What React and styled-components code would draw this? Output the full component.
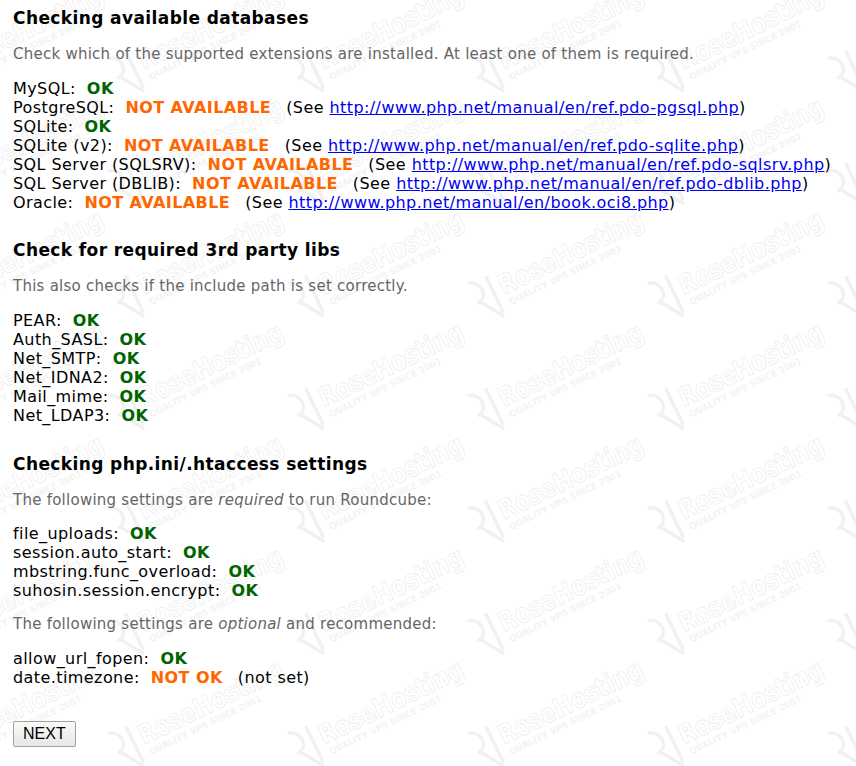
import React from "react";
import styled, { createGlobalStyle } from "styled-components";

const Global = createGlobalStyle`
  html, body { margin: 0; padding: 0; background: #fff; }
  body { font-family: Verdana, "DejaVu Sans", sans-serif; color: #000; }
`;

const Page = styled.div`
  position: relative;
  width: 856px;
  height: 766px;
  overflow: hidden;
  padding: 8px 13px 0 13px;
  box-sizing: border-box;
`;

const Content = styled.div`
  position: relative;
  z-index: 1;
`;

const Watermark = styled.svg`
  position: absolute;
  left: 0;
  top: 0;
  width: 856px;
  height: 766px;
  pointer-events: none;
  z-index: 0;
`;

const Section = styled.section`
  margin-bottom: 28.8px;
`;

const Heading = styled.h3`
  margin: 0;
  font-size: 17px;
  font-weight: bold;
  line-height: 20px;
  letter-spacing: 0.4px;
`;

const Hint = styled.p`
  margin: ${(p) => (p.$tight ? "15px" : "17px")} 0 15.5px;
  font-size: 15px;
  line-height: 18px;
  color: #666;
  letter-spacing: 0.25px;
`;

const List = styled.div`
  font-size: 16px;
  line-height: 19px;
  letter-spacing: 0.42px;
`;

const Row = styled.div`
  white-space: nowrap;
`;

const Status = styled.span`
  font-weight: bold;
  color: ${(p) => (p.$ok ? "#006400" : "#ff6600")};
  margin-left: 11px;
  margin-right: ${(p) => (p.$ok ? "0" : "15px")};
`;

const Link = styled.a`
  color: #0000ee;
  text-decoration: underline;
`;

const Button = styled.button`
  font-family: "Liberation Sans", Arial, sans-serif;
  font-size: 16px;
  padding: 3px 9px;
  height: 26px;
  border: 1px solid #a0a0a0;
  border-radius: 2px;
  background: linear-gradient(#fafafa, #e6e6e6);
  color: #000;
  margin-top: 6px;
`;

const dbs = [
  ["MySQL", true],
  ["PostgreSQL", false, "http://www.php.net/manual/en/ref.pdo-pgsql.php"],
  ["SQLite", true],
  ["SQLite (v2)", false, "http://www.php.net/manual/en/ref.pdo-sqlite.php"],
  ["SQL Server (SQLSRV)", false, "http://www.php.net/manual/en/ref.pdo-sqlsrv.php"],
  ["SQL Server (DBLIB)", false, "http://www.php.net/manual/en/ref.pdo-dblib.php"],
  ["Oracle", false, "http://www.php.net/manual/en/book.oci8.php"],
];

const libs = ["PEAR", "Auth_SASL", "Net_SMTP", "Net_IDNA2", "Mail_mime", "Net_LDAP3"];
const required = ["file_uploads", "session.auto_start", "mbstring.func_overload", "suhosin.session.encrypt"];

const marks = [];
for (let r = 0; r < 8; r++) {
  for (let c = -1; c < 5; c++) {
    marks.push([125 + c * 180, 77 + r * 112.5]);
  }
}

function Logo({ x, y }) {
  return (
    <g transform={`translate(${x} ${y}) rotate(-26)`}>
      <g fill="none" stroke="#f1f1f1" strokeWidth="3.5" strokeLinecap="round">
        <path d="M -6 -24 C 6 -20, 6 -4, -6 -2" />
        <path d="M -4 -2 L 10 20" />
        <path d="M 12 -22 L 12 16" />
      </g>
      <text
        x="20"
        y="2"
        fontFamily="'DejaVu Sans', sans-serif"
        fontWeight="bold"
        fontSize="27"
        textLength="158"
        lengthAdjust="spacingAndGlyphs"
        fill="#ffffff"
        stroke="#efefef"
        strokeWidth="0.9"
      >
        RoseHosting
      </text>
      <text
        x="22"
        y="14"
        fontFamily="'DejaVu Sans', sans-serif"
        fontWeight="bold"
        fontSize="9"
        textLength="124"
        lengthAdjust="spacingAndGlyphs"
        fill="#f3f3f3"
      >
        QUALITY VPS SINCE 2001
      </text>
    </g>
  );
}

export default function App() {
  return (
    <Page>
      <Global />
      <Watermark viewBox="0 0 856 766" aria-hidden="true">
        {marks.map(([x, y], i) => (
          <Logo key={i} x={x} y={y} />
        ))}
      </Watermark>
      <Content>
        <Section>
          <Heading>Checking available databases</Heading>
          <Hint>Check which of the supported extensions are installed. At least one of them is required.</Hint>
          <List>
            {dbs.map(([name, ok, url]) => (
              <Row key={name}>
                {name}:<Status $ok={ok}>{ok ? "OK" : "NOT AVAILABLE"}</Status>
                {url && (
                  <>
                    (See <Link href={url}>{url}</Link>)
                  </>
                )}
              </Row>
            ))}
          </List>
        </Section>
        <Section>
          <Heading>Check for required 3rd party libs</Heading>
          <Hint>This also checks if the include path is set correctly.</Hint>
          <List>
            {libs.map((n) => (
              <Row key={n}>
                {n}:<Status $ok>OK</Status>
              </Row>
            ))}
          </List>
        </Section>
        <Section>
          <Heading>Checking php.ini/.htaccess settings</Heading>
          <Hint>The following settings are <em>required</em> to run Roundcube:</Hint>
          <List>
            {required.map((n) => (
              <Row key={n}>
                {n}:<Status $ok>OK</Status>
              </Row>
            ))}
          </List>
          <Hint $tight>The following settings are <em>optional</em> and recommended:</Hint>
          <List>
            <Row>allow_url_fopen:<Status $ok>OK</Status></Row>
            <Row>date.timezone:<Status>NOT OK</Status>(not set)</Row>
          </List>
        </Section>
        <Button>NEXT</Button>
      </Content>
    </Page>
  );
}
